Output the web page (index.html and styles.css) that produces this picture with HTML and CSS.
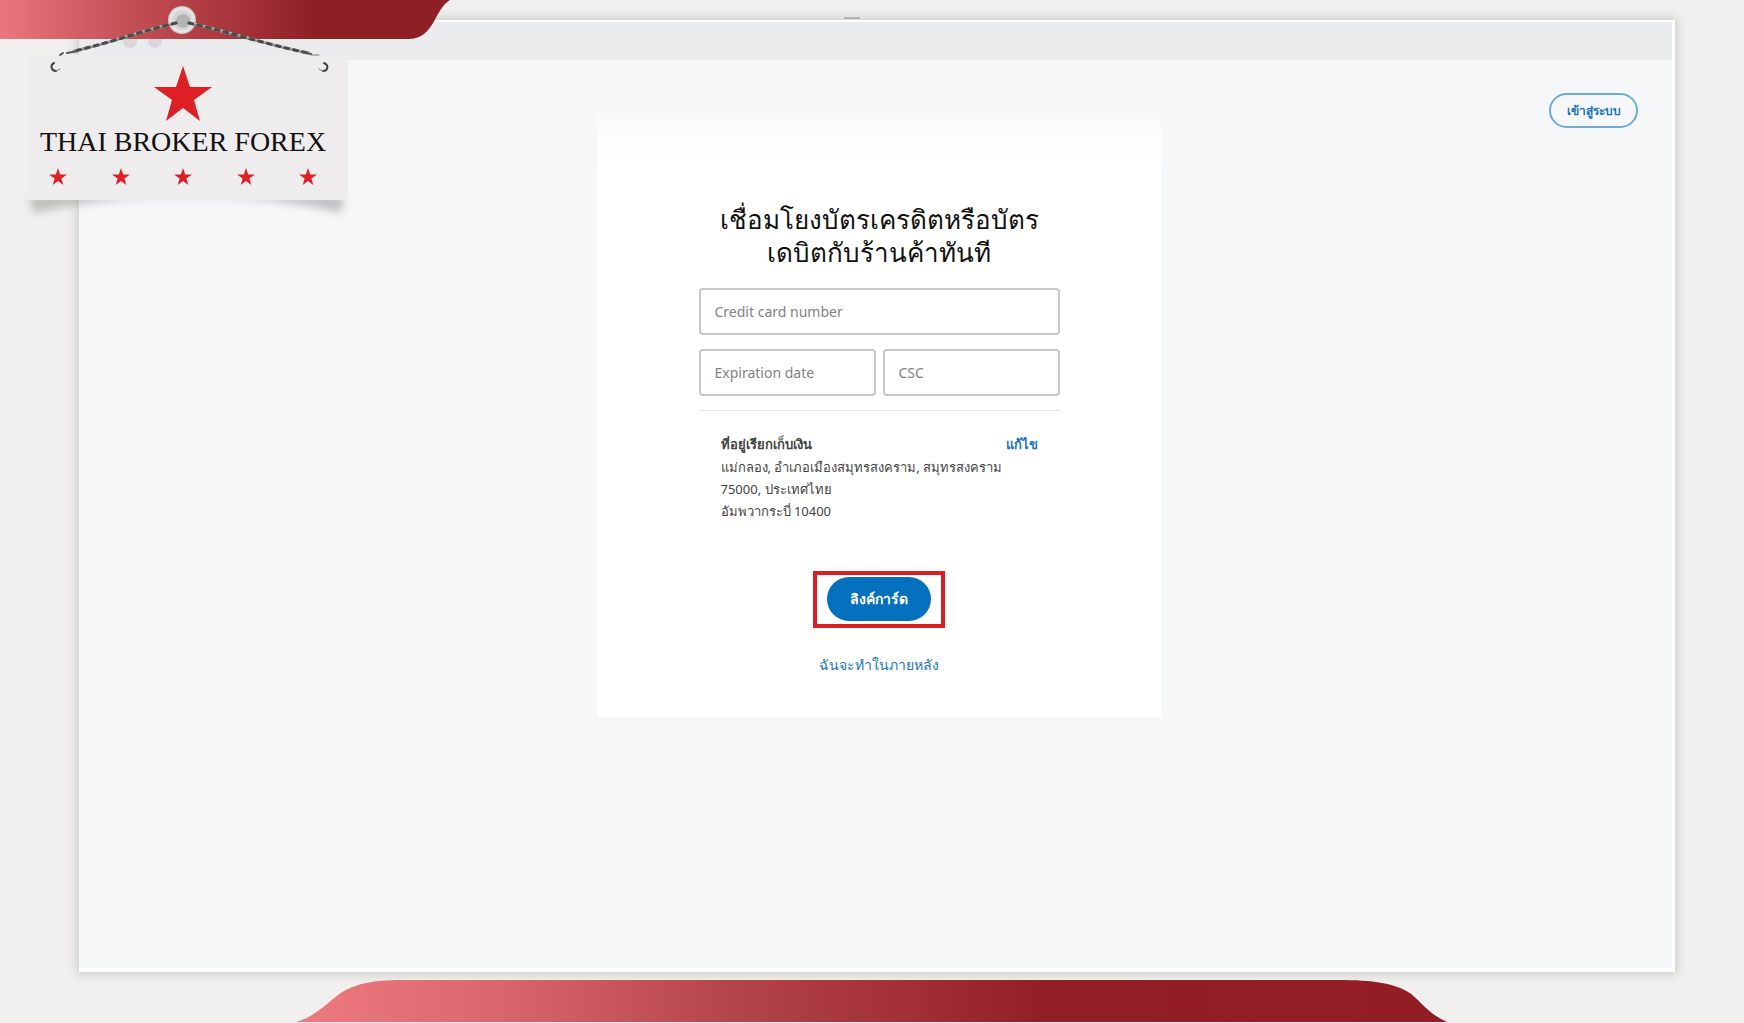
FILE: index.html
```html
<!DOCTYPE html>
<html lang="th">
<head>
    <meta charset="UTF-8">
    <meta name="viewport" content="width=device-width, initial-scale=1.0">
    <title>Thai Broker Forex</title>
    <link rel="stylesheet" href="styles.css">
</head>
<body>
    <main class="window">
        <div class="window-bar">
            <span class="dot"></span>
            <span class="dot"></span>
            <span class="window-notch"></span>
        </div>
        <div class="window-content">
            <button class="login" type="button">เข้าสู่ระบบ</button>

            <form class="card">
                <h1>เชื่อมโยงบัตรเครดิตหรือบัตร<br>เดบิตกับร้านค้าทันที</h1>

                <div class="fields">
                    <input class="wide" type="text" placeholder="Credit card number" aria-label="Credit card number">
                    <input type="text" placeholder="Expiration date" aria-label="Expiration date">
                    <input type="text" placeholder="CSC" aria-label="CSC">
                </div>

                <div class="address">
                    <div class="address-head">
                        <strong>ที่อยู่เรียกเก็บเงิน</strong>
                        <a href="#">แก้ไข</a>
                    </div>
                    <p>แม่กลอง, อำเภอเมืองสมุทรสงคราม, สมุทรสงคราม</p>
                    <p>75000, ประเทศไทย</p>
                    <p>อัมพวากระบี่ 10400</p>
                </div>

                <div class="highlight">
                    <button class="submit" type="button">ลิงค์การ์ด</button>
                </div>
                <a class="later" href="#">ฉันจะทำในภายหลัง</a>
            </form>
        </div>
    </main>

    <footer>
        <svg class="ribbon-bottom" viewBox="0 0 1158 42" preserveAspectRatio="none" aria-hidden="true">
            <defs>
                <linearGradient id="red-bottom">
                    <stop offset="0" stop-color="#ee7a80"/>
                    <stop offset=".15" stop-color="#dd6a70"/>
                    <stop offset=".38" stop-color="#b5444a"/>
                    <stop offset=".65" stop-color="#921f25"/>
                    <stop offset="1" stop-color="#931d24"/>
                </linearGradient>
            </defs>
            <path fill="url(#red-bottom)" d="M0 42C18 37 28 26 41 16C57 4 75 0 107 0H1048C1084 0 1106 3 1122 14C1134 24 1140 34 1158 42Z"/>
        </svg>
    </footer>

    <!-- Logo -->
    <header class="brand">
        <svg class="ribbon-top" viewBox="0 0 450 39" aria-hidden="true">
            <defs>
                <linearGradient id="red-top">
                    <stop offset="0" stop-color="#e9777d"/>
                    <stop offset=".3" stop-color="#c14e53"/>
                    <stop offset=".7" stop-color="#901f25"/>
                    <stop offset="1" stop-color="#8e1f25"/>
                </linearGradient>
            </defs>
            <path fill="url(#red-top)" d="M0 0H450C434 9 435 39 408 39H0Z"/>
        </svg>

        <svg class="sign-shadow" viewBox="0 0 340 40" aria-hidden="true">
            <path fill="#8b8b8b" d="M12 0H326L323 18C240 -4 105 -4 15 18Z"/>
        </svg>

        <div class="sign">
            <svg class="big-star" viewBox="0 0 58 55" aria-hidden="true">
                <path d="M29 0L36 21H58L40 34L46 55L29 42L12 55L18 34L0 21H22Z"/>
            </svg>
            <div class="brand-name">THAI BROKER FOREX</div>
            <div class="small-stars">
                <svg viewBox="0 0 58 55" aria-hidden="true"><path d="M29 0L36 21H58L40 34L46 55L29 42L12 55L18 34L0 21H22Z"/></svg>
                <svg viewBox="0 0 58 55" aria-hidden="true"><path d="M29 0L36 21H58L40 34L46 55L29 42L12 55L18 34L0 21H22Z"/></svg>
                <svg viewBox="0 0 58 55" aria-hidden="true"><path d="M29 0L36 21H58L40 34L46 55L29 42L12 55L18 34L0 21H22Z"/></svg>
                <svg viewBox="0 0 58 55" aria-hidden="true"><path d="M29 0L36 21H58L40 34L46 55L29 42L12 55L18 34L0 21H22Z"/></svg>
                <svg viewBox="0 0 58 55" aria-hidden="true"><path d="M29 0L36 21H58L40 34L46 55L29 42L12 55L18 34L0 21H22Z"/></svg>
            </div>
        </div>

        <svg class="chain" viewBox="0 0 360 80" aria-hidden="true">
            <defs>
                <radialGradient id="pin" cx=".5" cy=".5" r=".5">
                    <stop offset="0" stop-color="#d4d4d4"/>
                    <stop offset=".6" stop-color="#d2d4d4"/>
                    <stop offset=".85" stop-color="#e8e8e8"/>
                    <stop offset="1" stop-color="#c9bfbf"/>
                </radialGradient>
            </defs>
            <circle cx="182" cy="20" r="14" fill="url(#pin)"/>
            <circle cx="183" cy="21" r="7" fill="#b4b4b4"/>
            <g fill="none" stroke-linecap="round">
                <path stroke="#8f8f8f" stroke-width="3" d="M176 23C145 30 110 43 74 51M189 23C225 31 265 44 308 53"/>
                <path stroke="#4b4b4b" stroke-width="3" stroke-dasharray="4 5" d="M176 23C145 30 110 43 74 51M189 23C225 31 265 44 308 53"/>
                <path stroke="#c4c4c4" stroke-width="1" stroke-dasharray="2 7" stroke-dashoffset="3" d="M176 22C145 29 110 42 74 50M189 22C225 30 265 43 308 52"/>
                <path stroke="#555" stroke-width="2" d="M78 51L67 53M63 53L60 55M302 52L311 54"/>
                <path stroke="#777" stroke-width="1" d="M311 55H319"/>
                <path stroke="#444" stroke-width="2" d="M54 63C50 65 51 71 56 71M324 63C329 65 328 71 323 71"/>
                <path stroke="#777" stroke-width="1" d="M56 71L60 69M323 71L319 69"/>
            </g>
        </svg>
    </header>
</body>
</html>
```
FILE: styles.css
```css
* {
    box-sizing: border-box;
}

body {
    display: flex;
    flex-direction: column;
    min-height: 100vh;
    margin: 0;
    background-color: #f1f0ee;
    color: #444;
    font-family: 'Noto Sans', 'Open Sans', sans-serif;
    font-size: 13px;
    line-height: 22px;
}

a {
    color: #1a75bb;
    text-decoration: none;
}

/* Window */
.window {
    flex: 1;
    display: flex;
    flex-direction: column;
    margin: 20px 69px 0 79px;
    border: solid #fdfdfd;
    border-width: 2px 3px 4px 0;
    background-color: #f5f7f9;
    box-shadow: 0 0 10px 2px #c9c9c7;
}

.window-bar {
    position: relative;
    display: flex;
    align-items: center;
    gap: 11px;
    height: 38px;
    padding-left: 44px;
    background-color: #eaebed;
}

.dot {
    width: 14px;
    height: 14px;
    border-radius: 50%;
    background-color: #dcd5d9;
}

.window-notch {
    position: absolute;
    top: -5px;
    left: 48%;
    width: 16px;
    height: 2px;
    background-color: #b4b4b2;
}

.window-content {
    flex: 1;
    position: relative;
    display: flex;
    flex-direction: column;
    align-items: center;
    padding: 51px 0 40px 6px;
}

.login {
    position: absolute;
    top: 33px;
    right: 34px;
    width: 89px;
    height: 35px;
    padding: 0;
    border: 2px solid #6aaddc;
    border-radius: 18px;
    background: none;
    color: #1a75bb;
    font: bold 12px 'Noto Sans', sans-serif;
}

/* Card form */
.card {
    display: flex;
    flex-direction: column;
    align-items: center;
    width: 564px;
    padding: 92px 101px 41px 102px;
    background: linear-gradient(#f9fafc, #fff 60px);
}

h1 {
    margin: 0 0 19px;
    color: #111;
    font-size: 26px;
    font-weight: normal;
    line-height: 33px;
    text-align: center;
    white-space: nowrap;
}

.fields {
    display: grid;
    grid-template-columns: 1fr 1fr;
    gap: 14px 7px;
    width: 100%;
    padding-bottom: 14px;
    border-bottom: 1px solid #e4e4e4;
}

.fields .wide {
    grid-column: 1 / 3;
}

.fields input {
    width: 100%;
    height: 47px;
    padding: 0 14px;
    border: 2px solid #c8c8c8;
    border-radius: 4px;
    background-color: #fff;
    font: 14px 'Noto Sans', sans-serif;
}

.fields input::placeholder {
    color: #7d8388;
}

.address {
    width: 100%;
    margin-top: 22px;
    padding: 0 22px;
    white-space: nowrap;
}

.address-head {
    display: flex;
    justify-content: space-between;
    margin-bottom: 1px;
}

.address-head a {
    font-weight: bold;
}

.address p {
    margin: 0;
}

.highlight {
    margin-top: 49px;
    padding: 2px 10px 3px;
    border: 4px solid #d71f27;
}

.submit {
    display: block;
    width: 104px;
    height: 44px;
    padding: 0;
    border: 0;
    border-radius: 22px;
    background-color: #0570bd;
    color: #fff;
    font: bold 14px 'Noto Sans', sans-serif;
}

.later {
    margin-top: 26px;
    font-size: 14px;
}

/* Ribbons */
footer {
    margin-top: 8px;
    padding: 0 17%;
}

.ribbon-bottom {
    display: block;
    width: 100%;
    height: 42px;
    margin-bottom: 1px;
}

.ribbon-top {
    position: absolute;
    top: 0;
    left: 0;
    width: 450px;
    height: 39px;
}

/* Hanging sign over the window corner */
.brand {
    position: absolute;
    top: 0;
    left: 0;
    width: 450px;
}

.sign {
    position: absolute;
    top: 55px;
    left: 27px;
    display: flex;
    flex-direction: column;
    align-items: center;
    width: 321px;
    height: 145px;
    padding: 11px 21px 0 12px;
    background-color: #eeecec;
}

.sign svg {
    fill: #dd1f26;
}

.sign-shadow {
    position: absolute;
    top: 195px;
    left: 18px;
    width: 340px;
    height: 40px;
    opacity: .5;
    filter: blur(4px);
}

.big-star {
    width: 58px;
    height: 55px;
}

.brand-name {
    margin-top: 5px;
    color: #111;
    font-family: 'Liberation Serif', serif;
    font-size: 28px;
    line-height: 32px;
    white-space: nowrap;
}

.small-stars {
    display: flex;
    justify-content: space-between;
    width: 100%;
    margin-top: 10px;
    padding: 0 10px;
}

.small-stars svg {
    width: 18px;
    height: 17px;
}

.chain {
    position: absolute;
    top: 0;
    left: 0;
    width: 360px;
    height: 80px;
}
```
